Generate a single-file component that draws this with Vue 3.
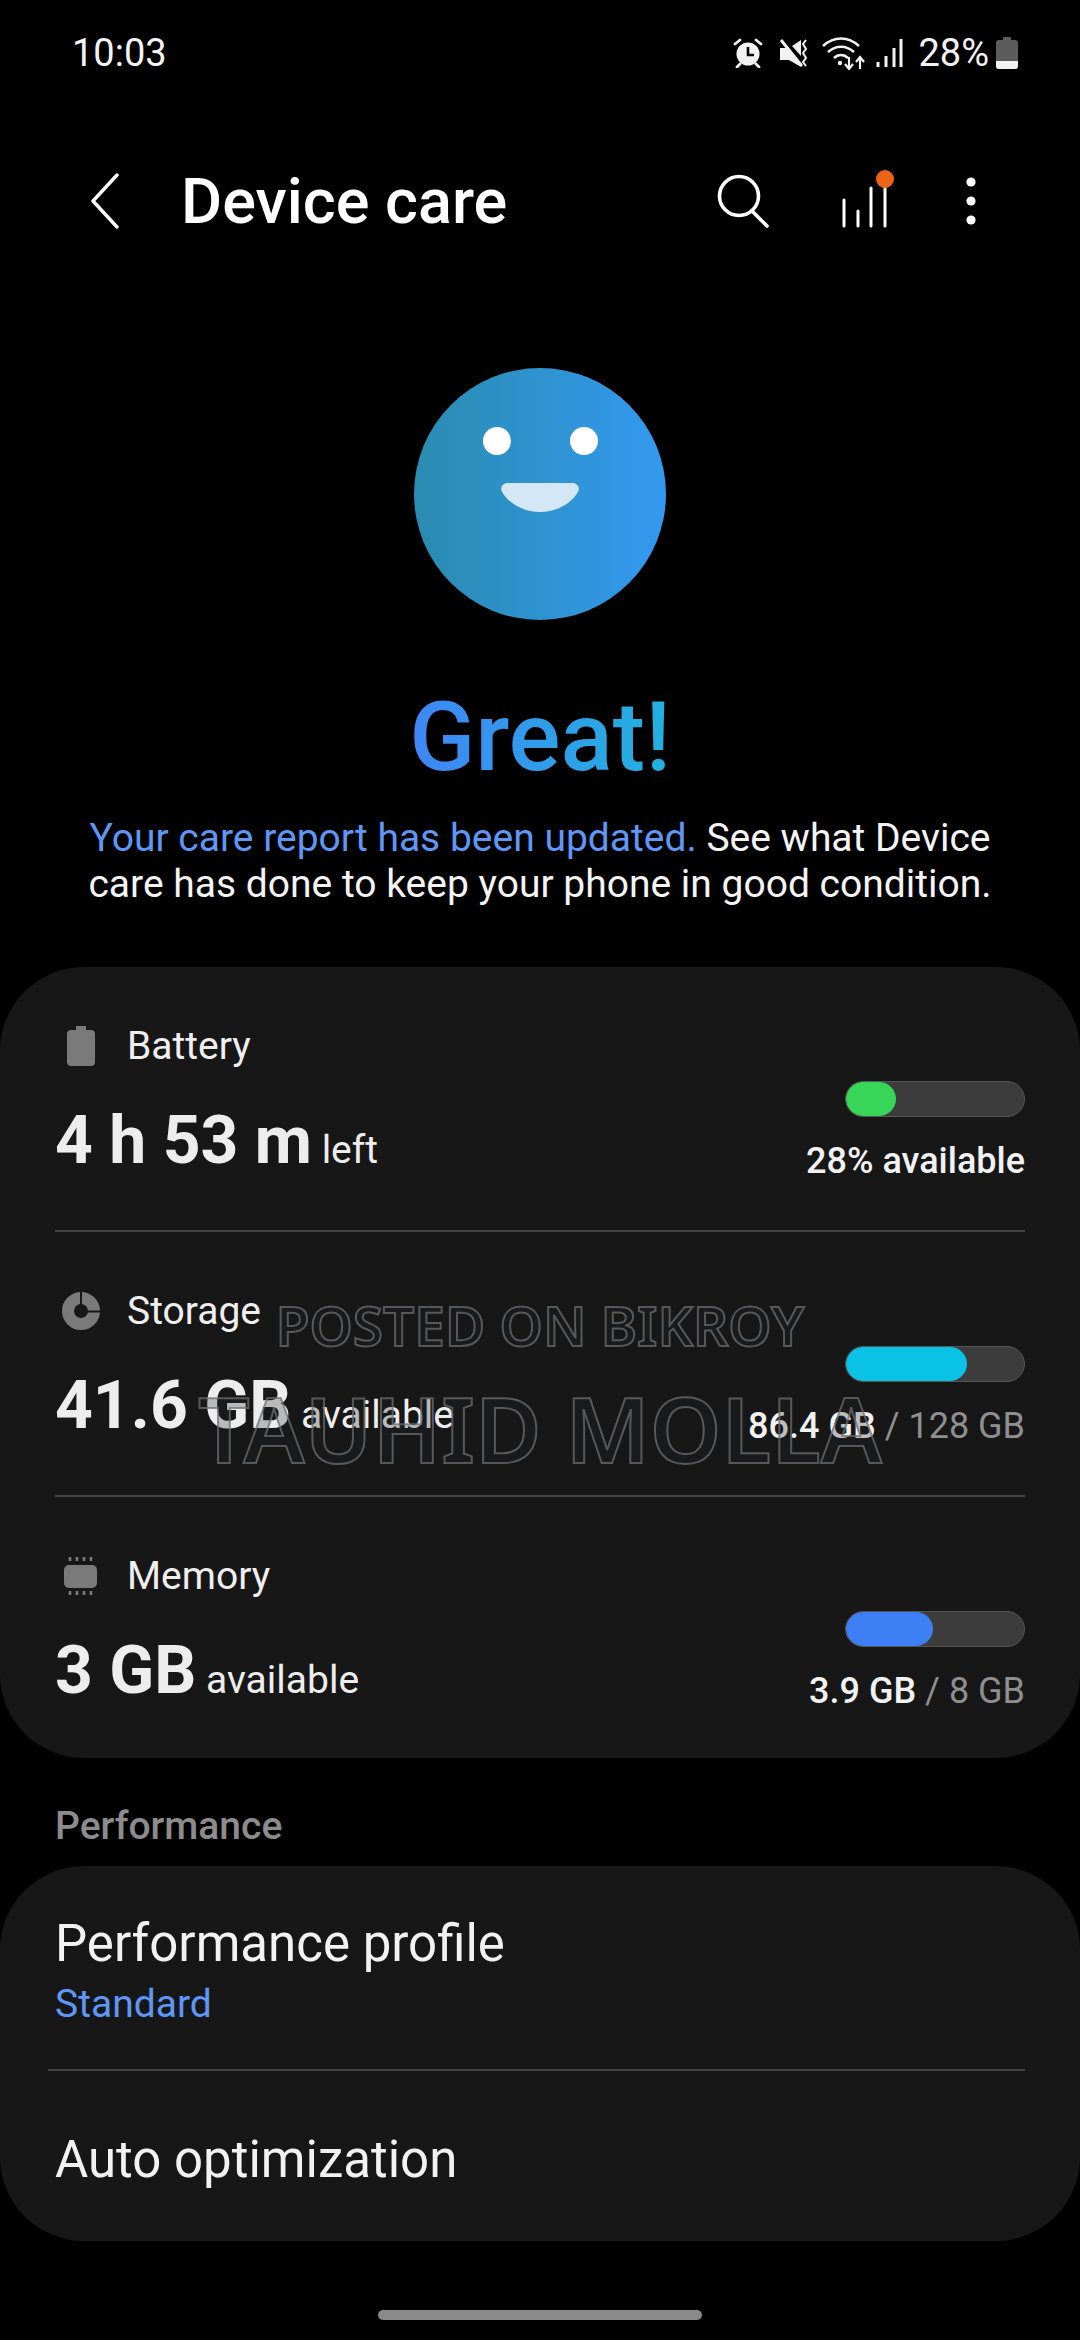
<script setup>
const rows = [
  { name: "Battery", icon: "battery", value: "4 h 53 m", unit: "left", color: "#38d658", pct: 28, strong: "28% available", rest: "" },
  { name: "Storage", icon: "storage", value: "41.6 GB", unit: "available", color: "#09c2e6", pct: 68, strong: "86.4 GB", rest: " / 128 GB" },
  { name: "Memory", icon: "memory", value: "3 GB", unit: "available", color: "#3d7ff5", pct: 49, strong: "3.9 GB", rest: " / 8 GB" },
];
</script>

<template>
  <div class="page">
    <div class="status">
      <span class="time">10:03</span>
      <div class="status-right">
        <svg class="st-alarm" width="30" height="30" viewBox="0 0 30 30">
          <circle cx="15" cy="16" r="11.5" fill="#f2f2f2" />
          <path d="M15 9v8h6" fill="none" stroke="#000" stroke-width="2.6" />
          <path d="M2 6l5-4M28 6l-5-4M7 26l-3 3M23 26l3 3" stroke="#f2f2f2" stroke-width="2.8" stroke-linecap="round" />
        </svg>
        <svg class="st-mute" width="30" height="30" viewBox="0 0 30 30">
          <path d="M1 10h6l17 17-2 2-12-7H1z" fill="#f2f2f2" />
          <path d="M2 2l20 25" stroke="#f2f2f2" stroke-width="3" />
          <path d="M13 8l9-6v16z" fill="#f2f2f2" />
          <path d="M27 2l-3 4 3 5-3 4 3 5-3 4 3 4" fill="none" stroke="#f2f2f2" stroke-width="2" />
        </svg>
        <svg class="st-wifi" width="44" height="33" viewBox="0 0 44 33">
          <path d="M1 9c11-10 25-10 36 0M6 15c8-7 18-7 26 0M12 21c4-4 10-4 14 0" fill="none" stroke="#f2f2f2" stroke-width="2.6" />
          <circle cx="18" cy="26" r="2.2" fill="#f2f2f2" />
          <path d="M27 20v12M23 27l4 5 4-5" fill="none" stroke="#f2f2f2" stroke-width="2.2" />
          <path d="M38 32V20M34 25l4-5 4 5" fill="none" stroke="#f2f2f2" stroke-width="2.2" />
        </svg>
        <svg class="st-signal" width="27" height="30" viewBox="0 0 27 30">
          <path d="M2 29v-5M10 29V18M18 29V10M25 29V1" stroke="#f2f2f2" stroke-width="3" />
        </svg>
        <span class="st-pct">28%</span>
        <svg width="22" height="32" viewBox="0 0 22 32">
          <path d="M7 0h8v3h4a3 3 0 0 1 3 3v23a3 3 0 0 1-3 3H3a3 3 0 0 1-3-3V6a3 3 0 0 1 3-3h4z" fill="#5c5c5c" />
          <path d="M0 24h22v5a3 3 0 0 1-3 3H3a3 3 0 0 1-3-3z" fill="#f2f2f2" />
        </svg>
      </div>
    </div>

    <div class="toolbar">
      <svg class="back" width="28" height="56" viewBox="0 0 28 56">
        <path d="M26 2L2 28l24 26" fill="none" stroke="#fff" stroke-width="3.4" stroke-linecap="round" stroke-linejoin="round" />
      </svg>
      <h1 class="title">Device care</h1>
      <svg class="search" width="54" height="54" viewBox="0 0 54 54">
        <circle cx="22" cy="22" r="19.5" fill="none" stroke="#fff" stroke-width="3.6" />
        <path d="M35 37l15 15" stroke="#fff" stroke-width="3.6" stroke-linecap="round" />
      </svg>
      <svg class="bars" width="54" height="58" viewBox="0 0 54 58">
        <path d="M3 56V30M17 56V41M30 56V18M44 56V15" stroke="#fff" stroke-width="3" stroke-linecap="round" />
        <circle cx="44" cy="9" r="9" fill="#ec6418" />
      </svg>
      <svg class="more" width="14" height="48" viewBox="0 0 14 48">
        <circle cx="7" cy="5" r="4.6" fill="#fff" />
        <circle cx="7" cy="24" r="4.6" fill="#fff" />
        <circle cx="7" cy="43" r="4.6" fill="#fff" />
      </svg>
    </div>

    <div class="hero">
      <div class="face">
        <div class="eyes"><span class="eye"></span><span class="eye"></span></div>
        <svg class="mouth" width="78" height="29" viewBox="0 0 78 29">
          <path d="M6 0h66a6 6 0 0 1 5 9C70 21 55 29 39 29S8 21 1 9a6 6 0 0 1 5-9z" fill="#d3e7f6" />
        </svg>
      </div>
      <div class="great">Great!</div>
      <p class="report"><span class="link">Your care report has been updated.</span> See what Device care has done to keep your phone in good condition.</p>
    </div>

    <div class="card usage">
      <div v-for="r in rows" :key="r.name" class="row">
        <div class="row-left">
          <div class="row-name">
            <span class="row-icon">
              <svg v-if="r.icon === 'battery'" width="28" height="40" viewBox="0 0 28 40">
                <path d="M9 0h10v4h5a4 4 0 0 1 4 4v28a4 4 0 0 1-4 4H4a4 4 0 0 1-4-4V8a4 4 0 0 1 4-4h5z" fill="#7a7a7a" />
              </svg>
              <svg v-else-if="r.icon === 'storage'" width="38" height="38" viewBox="0 0 38 38">
                <circle cx="19" cy="19" r="13" fill="none" stroke="#7a7a7a" stroke-width="12" />
                <path d="M19 0v13M24 19.5h14" stroke="#171717" stroke-width="2" />
              </svg>
              <svg v-else width="34" height="38" viewBox="0 0 34 38">
                <rect x="0" y="8" width="33" height="23" rx="5" fill="#7a7a7a" />
                <path d="M6 0v4M13 0v4M20 0v4M27 0v4M6 34v4M13 34v4M20 34v4M27 34v4" stroke="#7a7a7a" stroke-width="2.6" />
              </svg>
            </span>
            <span>{{ r.name }}</span>
          </div>
          <div class="row-value"><b>{{ r.value }}</b> <span class="unit">{{ r.unit }}</span></div>
        </div>
        <div class="row-right">
          <div class="track">
            <div class="fill" :style="{ width: r.pct + '%', background: r.color }"></div>
          </div>
          <div class="usage-text"><b>{{ r.strong }}</b><span v-if="r.rest" class="rest">{{ r.rest }}</span></div>
        </div>
      </div>
      <div class="mark">
        <div class="mark-top">POSTED ON BIKROY</div>
        <div class="mark-main">TAUHID MOLLA</div>
      </div>
    </div>

    <div class="section">Performance</div>

    <div class="card perf">
      <div class="perf-item first">
        <div class="perf-title">Performance profile</div>
        <div class="perf-sub">Standard</div>
      </div>
      <div class="perf-item second">
        <div class="perf-title">Auto optimization</div>
      </div>
    </div>

    <div class="home"><span></span></div>
  </div>
</template>

<style scoped>
.page {
  width: 1080px;
  height: 2340px;
  background: #000;
  color: #f2f2f2;
  font-family: Roboto, "Noto Sans", sans-serif;
  display: flex;
  flex-direction: column;
  overflow: hidden;
}
.status {
  height: 106px;
  padding: 0 62px 0 72px;
  display: flex;
  justify-content: space-between;
  align-items: center;
  box-sizing: border-box;
}
.time {
  font-size: 38px;
  color: #f4f4f4;
}
.status-right {
  display: flex;
  align-items: center;
}
.st-alarm { margin-right: 16px; }
.st-mute { margin-right: 13px; }
.st-wifi { margin-right: 10px; }
.st-signal { margin-right: 15px; }
.st-pct { font-size: 38px; margin-right: 7px; }

.toolbar {
  height: 98px;
  margin-top: 46px;
  padding: 0 102px 0 91px;
  display: flex;
  align-items: center;
}
.title {
  margin: 0 0 0 62px;
  font-size: 63px;
  font-weight: 500;
  color: #fff;
  flex: 1;
}
.search { margin-right: 70px; }
.bars { margin-right: 69px; margin-top: -4px; }

.hero {
  display: flex;
  flex-direction: column;
  align-items: center;
  padding-top: 118px;
}
.face {
  width: 252px;
  height: 252px;
  border-radius: 50%;
  background: linear-gradient(90deg, #2a8cb0 0%, #3399f0 100%);
  display: flex;
  flex-direction: column;
  align-items: center;
  padding-top: 59px;
  box-sizing: border-box;
}
.eyes {
  display: flex;
  gap: 59px;
}
.eye {
  width: 28px;
  height: 28px;
  background: #fff;
  border-radius: 50%;
}
.mouth {
  margin-top: 28px;
}
.great {
  margin-top: 64px;
  font-size: 97px;
  font-weight: 500;
  line-height: 106px;
  background: linear-gradient(90deg, #3f86f5 0%, #22b2df 100%);
  -webkit-background-clip: text;
  background-clip: text;
  color: transparent;
}
.report {
  margin: 25px 0 0;
  width: 960px;
  font-size: 39px;
  line-height: 46px;
  text-align: center;
  color: #f4f4f4;
}
.link { color: #5e97f6; }

.card {
  background: #171717;
  border-radius: 84px;
}
.usage {
  position: relative;
  margin-top: 60px;
  height: 791px;
  padding: 0 55px;
  box-sizing: border-box;
}
.row {
  height: 265px;
  box-sizing: border-box;
  display: flex;
  justify-content: space-between;
  border-bottom: 2px solid #444;
  padding-top: 53px;
}
.row:nth-child(3) { border-bottom: none; }
.row-name {
  display: flex;
  align-items: center;
  height: 52px;
  font-size: 39px;
  color: #efefef;
}
.row-icon {
  width: 52px;
  margin-right: 20px;
  display: flex;
  justify-content: center;
}
.row-value {
  margin-top: 33px;
  line-height: 72px;
  font-size: 39px;
}
.row-value b {
  font-size: 66px;
  font-weight: 700;
  color: #ededed;
}
.unit { color: #ededed; }
.row-right {
  display: flex;
  flex-direction: column;
  align-items: flex-end;
  padding-top: 61px;
}
.track {
  width: 180px;
  height: 36px;
  background: #3c3c3c;
  border: 1px solid #555;
  border-radius: 18px;
  box-sizing: border-box;
  overflow: hidden;
}
.fill {
  height: 100%;
  border-radius: 18px;
}
.usage-text {
  margin-top: 21px;
  font-size: 36px;
  line-height: 46px;
}
.usage-text b {
  font-weight: 500;
  color: #f2f2f2;
}
.rest { color: #8f8f8f; }

.mark {
  position: absolute;
  left: 0;
  right: 0;
  top: 327px;
  text-align: center;
  pointer-events: none;
  font-family: "Noto Sans", "Open Sans", sans-serif;
  font-weight: 600;
  color: rgba(30, 35, 42, 0.25);
  -webkit-text-stroke: 2px rgba(110, 110, 110, 0.75);
  white-space: nowrap;
}
.mark-top {
  font-size: 55px;
  line-height: 62px;
}
.mark-main {
  font-size: 91px;
  line-height: 92px;
  margin-top: 26px;
}

.section {
  margin: 48px 0 0 55px;
  font-size: 39px;
  line-height: 40px;
  font-weight: 500;
  color: #8c8c8c;
}
.perf {
  margin-top: 20px;
  height: 375px;
  padding: 0 55px 0 48px;
  box-sizing: border-box;
}
.perf-item {
  padding-left: 7px;
}
.first {
  height: 205px;
  padding-top: 50px;
  box-sizing: border-box;
  border-bottom: 2px solid #444;
}
.second {
  padding-top: 61px;
}
.perf-title {
  font-size: 51px;
  line-height: 56px;
  color: #f2f2f2;
}
.perf-sub {
  margin-top: 10px;
  font-size: 39px;
  line-height: 44px;
  color: #5e97f6;
}
.home {
  flex: 1;
  display: flex;
  justify-content: center;
  padding-top: 69px;
  box-sizing: border-box;
}
.home span {
  width: 324px;
  height: 10px;
  background: #8a8a8a;
  border-radius: 5px;
}
</style>
